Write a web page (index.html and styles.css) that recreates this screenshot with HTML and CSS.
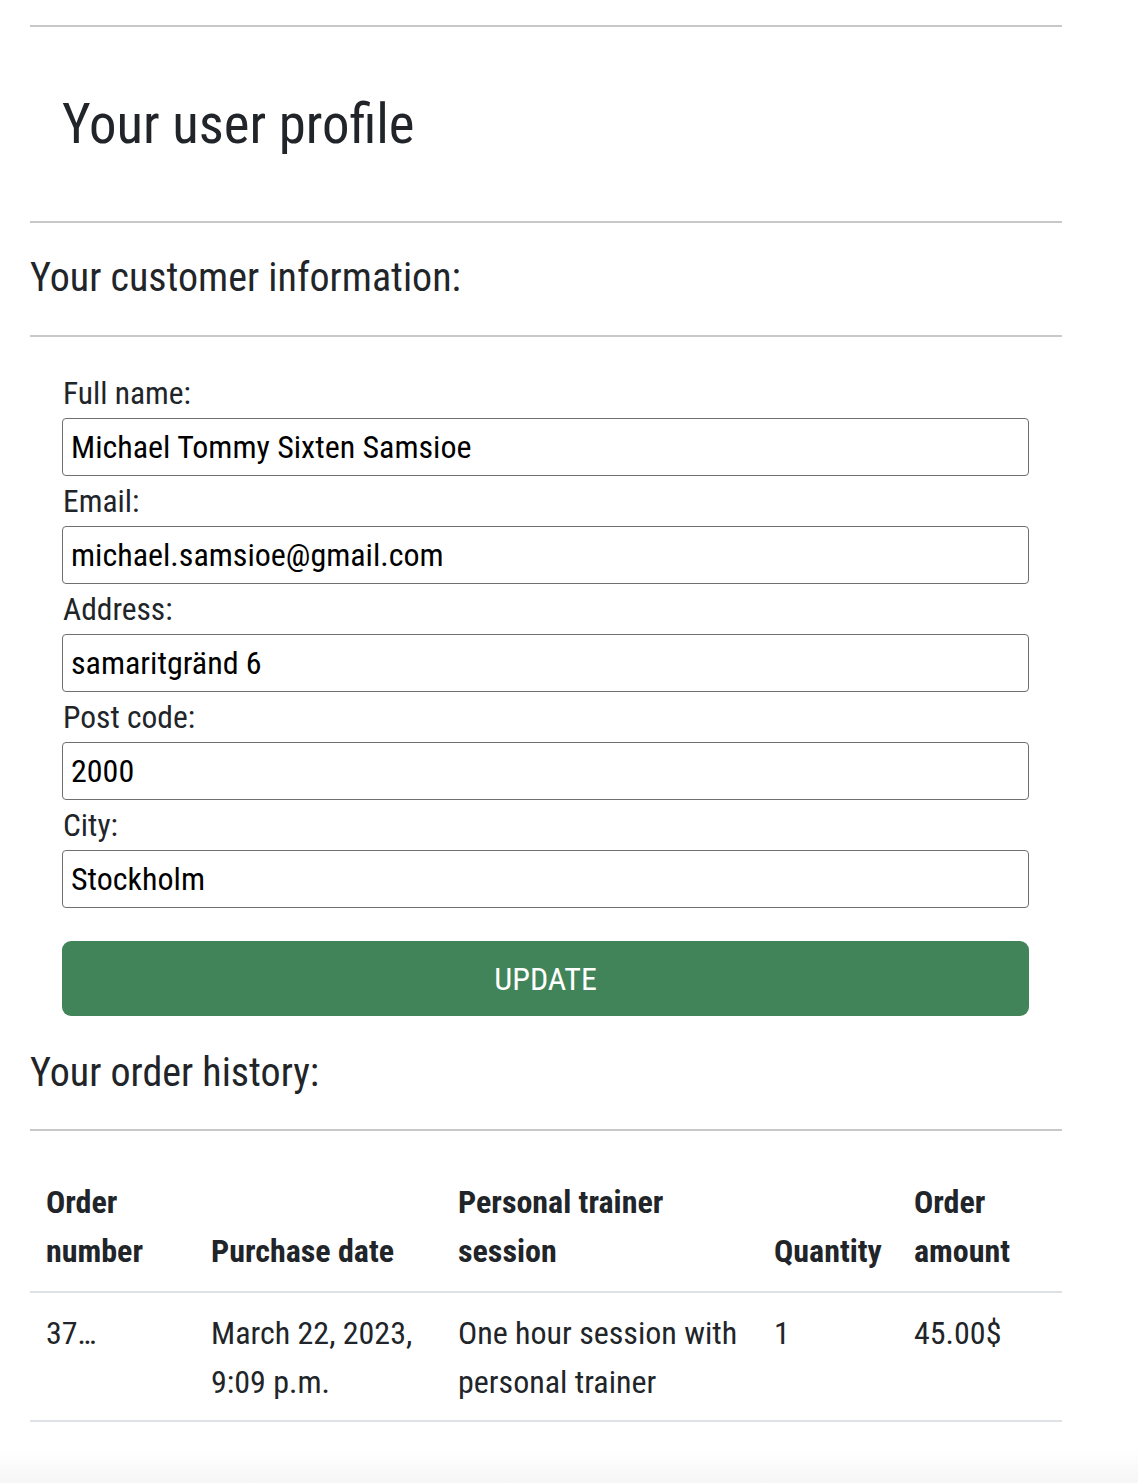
FILE: index.html
```html
<!DOCTYPE html>
<html lang="en">
<head>
<meta charset="utf-8">
<title>Your user profile</title>
<link rel="stylesheet" href="styles.css">
</head>
<body>
<main class="page">
  <hr class="rule">
  <div class="profile-head">
    <h1 class="title">Your user profile</h1>
  </div>
  <hr class="rule">
  <h2 class="section-title first">Your customer information:</h2>
  <hr class="rule">
  <form class="profile-form">
    <label class="field-label" for="full_name">Full name:</label>
    <input class="field-input" id="full_name" type="text" value="Michael Tommy Sixten Samsioe">
    <label class="field-label" for="email">Email:</label>
    <input class="field-input" id="email" type="text" value="michael.samsioe@gmail.com">
    <label class="field-label" for="address">Address:</label>
    <input class="field-input" id="address" type="text" value="samaritgränd 6">
    <label class="field-label" for="postcode">Post code:</label>
    <input class="field-input" id="postcode" type="text" value="2000">
    <label class="field-label" for="city">City:</label>
    <input class="field-input" id="city" type="text" value="Stockholm">
    <button class="update-btn" type="button">UPDATE</button>
  </form>
  <h2 class="section-title">Your order history:</h2>
  <hr class="rule">
  <table class="orders">
    <colgroup>
      <col class="c1"><col class="c2"><col class="c3"><col class="c4"><col class="c5">
    </colgroup>
    <thead>
      <tr>
        <th>Order number</th>
        <th>Purchase date</th>
        <th>Personal trainer session</th>
        <th>Quantity</th>
        <th>Order amount</th>
      </tr>
    </thead>
    <tbody>
      <tr>
        <td>37…</td>
        <td>March 22, 2023, 9:09 p.m.</td>
        <td>One hour session with personal trainer</td>
        <td>1</td>
        <td>45.00$</td>
      </tr>
    </tbody>
  </table>
</main>
<div class="bottom-fade"></div>
</body>
</html>
```
FILE: styles.css
```css
html, body {
  margin: 0;
  padding: 0;
  background: #ffffff;
}

body {
  font-family: Roboto, "Liberation Sans", sans-serif;
  font-stretch: 75%;
  color: #212529;
}

.page {
  margin-left: 30px;
  width: 1032px;
  padding-top: 25px;
}

.rule {
  margin: 0;
  border: 0;
  height: 0;
  border-top: 2px solid #c8c8c8;
}

.profile-head {
  padding: 64px 33px 64px 32px;
}

.title {
  margin: 0;
  font-size: 54.8px;
  line-height: 66px;
  font-weight: 400;
}

.section-title {
  margin: 0;
  padding: 33px 0 32px 0;
  font-size: 40px;
  line-height: 48px;
  font-weight: 400;
}

.section-title.first {
  padding: 31px 0 33px 0;
}

.profile-form {
  display: flex;
  flex-direction: column;
  padding: 31px 33px 0 32px;
}

.field-label {
  display: block;
  padding: 5.5px 0 4.5px 1px;
  font-size: 31.5px;
  line-height: 40px;
}

.field-input {
  box-sizing: border-box;
  height: 58px;
  width: 100%;
  margin: 0;
  padding: 0 8px;
  border: 1.5px solid #6f6f6f;
  border-radius: 4px;
  font-family: inherit;
  font-stretch: 75%;
  font-size: 32px;
  color: #000;
  background: #fff;
}

.update-btn {
  margin-top: 33px;
  height: 75px;
  width: 100%;
  border: 0;
  border-radius: 9px;
  background: #418459;
  color: #ffffff;
  font-family: inherit;
  font-stretch: 75%;
  font-size: 32px;
  padding: 0;
}

.orders {
  margin-top: 33px;
  width: 1032px;
  border-collapse: collapse;
  table-layout: fixed;
  font-size: 32px;
  line-height: 49px;
}

.c1 { width: 165px; }
.c2 { width: 247px; }
.c3 { width: 316px; }
.c4 { width: 140px; }
.c5 { width: 164px; }

.orders th,
.orders td {
  text-align: left;
  padding: 14px 16px 15px 16px;
}

.orders th {
  font-weight: 700;
  vertical-align: bottom;
  border-bottom: 2px solid #dee2e6;
}

.orders td {
  vertical-align: top;
  padding-top: 16px;
  padding-bottom: 13px;
  border-bottom: 2px solid #dee2e6;
}

.bottom-fade {
  margin-top: 27px;
  height: 34px;
  background: linear-gradient(#ffffff, #f6f6f6);
}
```
